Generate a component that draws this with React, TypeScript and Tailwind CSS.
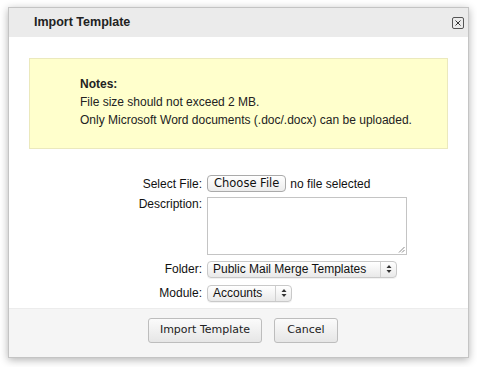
import React from "react";

function Arrows() {
  return (
    <svg width="6" height="10" viewBox="0 0 6 10" className="block">
      <path d="M3 1 L5.5 4 L0.5 4 Z" fill="#333" />
      <path d="M3 9 L5.5 6 L0.5 6 Z" fill="#333" />
    </svg>
  );
}

function FakeSelect({ label, width }: { label: string; width: string }) {
  return (
    <div
      className={`${width} h-[17px] flex items-stretch rounded-[4px] border border-[#c9c9c9] bg-gradient-to-b from-[#ffffff] to-[#e9e9e9] shadow-[0_1px_0_rgba(0,0,0,0.05)]`}
    >
      <div className="flex-1 flex items-center pl-[5px] text-[12px] text-[#111] leading-none">{label}</div>
      <div className="w-[16px] border-l border-[#d0d0d0] flex items-center justify-center">
        <Arrows />
      </div>
    </div>
  );
}

export default function App() {
  const sans = { fontFamily: '"Liberation Sans", Arial, Helvetica, sans-serif' };
  const tahoma = { fontFamily: '"DejaVu Sans", Tahoma, Verdana, sans-serif' };
  return (
    <div className="w-[477px] h-[367px] bg-white pl-[8px] pt-[7px]" style={sans}>
      <div className="w-[461px] h-[351px] flex flex-col border border-[#c4c4c4] shadow-[0_2px_8px_rgba(0,0,0,0.3)] bg-white">
        <div className="h-[29px] bg-[#ebebeb] flex items-center pl-[25px] pr-[4px]">
          <div className="flex-1 text-[12.5px] font-bold text-[#222]">Import Template</div>
          <div className="w-[12px] h-[12px] border border-[#555] rounded-[2px] flex items-center justify-center mr-[0px]">
            <svg width="8" height="8" viewBox="0 0 8 8">
              <path d="M1.5 1.5 L6.5 6.5 M6.5 1.5 L1.5 6.5" stroke="#333" strokeWidth="1" />
            </svg>
          </div>
        </div>
        <div className="flex-1 flex flex-col pt-[21px]">
          <div className="mx-[20px] h-[91px] bg-[#ffffcc] border border-[#ebe9bd] pl-[50px] pt-[16px] text-[12px] text-[#222] leading-[18px]">
            <div className="font-bold">Notes:</div>
            <div>File size should not exceed 2 MB.</div>
            <div>Only Microsoft Word documents (.doc/.docx) can be uploaded.</div>
          </div>
          <div className="mt-[26px] flex flex-col text-[12px] text-[#111]">
            <div className="flex items-center h-[17px]">
              <div className="w-[193px] text-right pr-0">Select File:</div>
              <div className="ml-[5px] h-[17px] px-[6px] rounded-[4px] border border-[#aaa] bg-gradient-to-b from-[#ffffff] to-[#ececec] flex items-center text-[11.5px] text-[#111]" style={tahoma}>
                Choose File
              </div>
              <div className="ml-[4px]">no file selected</div>
            </div>
            <div className="flex items-start mt-[5px]">
              <div className="w-[193px] text-right leading-[14px] pt-[0px]">Description:</div>
              <div className="ml-[5px] relative w-[200px] h-[58px] border border-[#c4c4c4] bg-white">
                <svg width="7" height="7" viewBox="0 0 7 7" className="absolute right-[1px] bottom-[1px]">
                  <path d="M6.5 1 L1 6.5 M6.5 4 L4 6.5" stroke="#888" strokeWidth="1" />
                </svg>
              </div>
            </div>
            <div className="flex items-center mt-[5px]">
              <div className="w-[193px] text-right">Folder:</div>
              <div className="ml-[5px]">
                <FakeSelect label="Public Mail Merge Templates" width="w-[190px]" />
              </div>
            </div>
            <div className="flex items-center mt-[6px]">
              <div className="w-[193px] text-right">Module:</div>
              <div className="ml-[5px]">
                <FakeSelect label="Accounts" width="w-[85px]" />
              </div>
            </div>
          </div>
        </div>
        <div className="h-[49px] bg-[#f5f5f5] border-t border-[#ececec] flex justify-center items-start pt-[9px] pl-[9px] gap-[12px]" style={tahoma}>
          <div className="w-[114px] h-[25px] rounded-[3px] border border-[#bdbdbd] bg-gradient-to-b from-[#fbfbfb] to-[#e6e6e6] flex items-center justify-center text-[11px] text-[#222]">
            Import Template
          </div>
          <div className="w-[64px] h-[25px] rounded-[3px] border border-[#bdbdbd] bg-gradient-to-b from-[#fbfbfb] to-[#e6e6e6] flex items-center justify-center text-[11px] text-[#222]">
            Cancel
          </div>
        </div>
      </div>
    </div>
  );
}
